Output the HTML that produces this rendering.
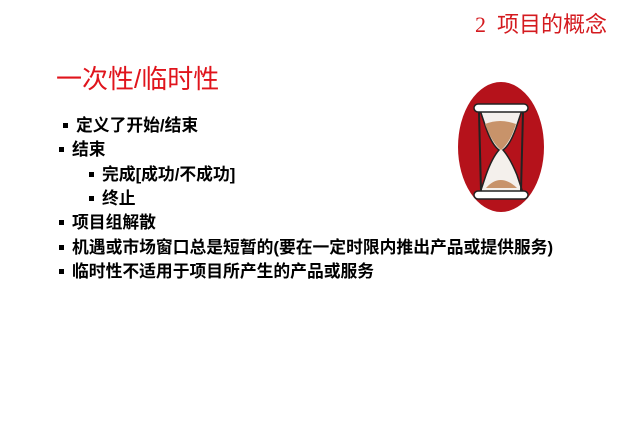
<!DOCTYPE html><html><head><meta charset="utf-8"><style>
body{margin:0;width:640px;height:443px;background:#fff;position:relative;overflow:hidden;font-family:"Liberation Sans","Noto Sans CJK SC",sans-serif}
.h{position:absolute;right:33px;top:7px;font-size:22px;color:#d41a1f;font-family:"Liberation Serif","Noto Sans CJK SC",sans-serif}
.t{position:absolute;left:56px;top:59px;font-size:26px;color:#e0141c}
.l{position:absolute;font-size:16.8px;font-weight:bold;color:#000;line-height:20px;white-space:nowrap}
.l:before{content:"";position:absolute;left:-13px;top:7px;width:5px;height:5px;background:#000}
</style></head><body>
<div class="h">2&nbsp; 项目的概念</div>
<div class="t">一次性/临时性</div>
<div class="l" style="left:76px;top:116px">定义了开始/结束</div>
<div class="l" style="left:72px;top:140px">结束</div>
<div class="l" style="left:102px;top:165px">完成[成功/不成功]</div>
<div class="l" style="left:102px;top:189px">终止</div>
<div class="l" style="left:72px;top:213px">项目组解散</div>
<div class="l" style="left:72px;top:238px">机遇或市场窗口总是短暂的(要在一定时限内推出产品或提供服务)</div>
<div class="l" style="left:72px;top:262px">临时性不适用于项目所产生的产品或服务</div>
<svg style="position:absolute;left:0;top:0" width="640" height="443">
<ellipse cx="501" cy="147" rx="43" ry="65" fill="#b5121b"/>
<path d="M480 110 L486 128 Q492 145 499 150 Q492 158 486 175 L480 193 L523 193 L517 175 Q510 158 503 150 Q510 145 516 128 L522 110 Z" fill="#f4f0ec" stroke="#222" stroke-width="1.5"/>
<path d="M485 124 Q500 118 516 124 Q510 143 501 150 Q492 143 485 124Z" fill="#c8936a"/>
<path d="M486 188 Q500 172 517 188Z" fill="#c8936a"/>
<rect x="474" y="104" width="54" height="8" rx="4" fill="#fff" stroke="#222" stroke-width="1.5"/>
<rect x="474" y="191" width="54" height="8" rx="4" fill="#fff" stroke="#222" stroke-width="1.5"/>
<line x1="479" y1="112" x2="481" y2="191" stroke="#222" stroke-width="2"/>
<line x1="523" y1="112" x2="521" y2="191" stroke="#222" stroke-width="2"/>
</svg>
</body></html>
